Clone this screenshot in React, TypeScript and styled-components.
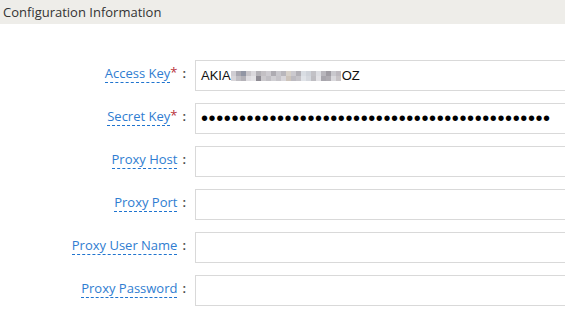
import React from "react";
import styled, { createGlobalStyle } from "styled-components";

const GlobalStyle = createGlobalStyle`
  html, body {
    margin: 0;
    padding: 0;
    background: #ffffff;
    overflow: hidden;
  }
  body {
    font-family: "Open Sans", "Liberation Sans", sans-serif;
  }
`;

const Page = styled.div`
  width: 565px;
  height: 313px;
  overflow: hidden;
`;

const SectionHeader = styled.div`
  height: 24px;
  background: #eeede9;
  color: #333333;
  font-size: 13px;
  line-height: 24px;
  padding-left: 3px;
`;

const Form = styled.div`
  display: flex;
  flex-direction: column;
  gap: 12px;
  padding-top: 36px;
`;

const Row = styled.div`
  display: grid;
  grid-template-columns: 186px 400px;
  column-gap: 9px;
  align-items: center;
  height: 31px;
`;

const LabelCell = styled.div`
  display: flex;
  justify-content: flex-end;
  align-items: baseline;
  font-size: 13px;
  margin-top: -4px;
`;

const LabelText = styled.span`
  color: #2f7dd1;
  border-bottom: 1px dashed #1f74cf;
  line-height: 17px;
`;

const Required = styled.span`
  color: #b8323a;
  font-size: 13px;
  position: relative;
  top: -1px;
`;

const Colon = styled.span`
  color: #444444;
  margin-left: 5px;
  font-weight: 600;
`;

const Field = styled.div`
  box-sizing: border-box;
  height: 31px;
  border: 1px solid #d9d9d9;
  background: #ffffff;
  display: flex;
  align-items: center;
  padding-left: 5px;
  font-family: "Liberation Sans", Arial, sans-serif;
  font-size: 13px;
  color: #111111;
`;

const PasswordInput = styled.input`
  border: none;
  outline: none;
  padding: 0;
  margin: 0;
  width: 390px;
  background: transparent;
  font-family: "Liberation Sans", Arial, sans-serif;
  font-size: 20px;
  letter-spacing: 0.6px;
  color: #000000;
`;

const Mosaic = styled.span`
  display: grid;
  grid-template-columns: repeat(22, 5px);
  grid-auto-rows: 5px;
  margin: 1px 1px 0 0;
`;

const Tile = styled.span<{ $c: string }>`
  background: ${(p) => p.$c};
`;

const tiles = [
  "#cfcdd2", "#a9a8b0", "#9296a4", "#c9c6ca", "#dad8dc", "#b3b1b6", "#c3c0c4",
  "#cdcbd0", "#aeacb2", "#c8c7cc", "#b9b7bc", "#d6d0c8", "#cbc9ce", "#b2b0b6",
  "#d9dde3", "#cfd3da", "#c2c1c6", "#dcdde2", "#b8b6bc", "#9f9ca3", "#c9c8cd", "#bdb9bf",
  "#d7d5d9", "#c0bec3", "#b4b2b8", "#dfdde1", "#e4e3e6", "#8e8b93", "#cbc9cd",
  "#c1bfc4", "#d0cfd3", "#c6c4c9", "#d8d6da", "#cdc4bb", "#bdbbc1", "#c5c3c8",
  "#e0e3e8", "#d5d8de", "#bebdc2", "#e2e1e5", "#a8a6ad", "#aeabb1", "#d9d8dc", "#c7c3c6",
];

type FieldRow = { label: string; required?: boolean; kind?: "key" | "secret" };

const rows: FieldRow[] = [
  { label: "Access Key", required: true, kind: "key" },
  { label: "Secret Key", required: true, kind: "secret" },
  { label: "Proxy Host" },
  { label: "Proxy Port" },
  { label: "Proxy User Name" },
  { label: "Proxy Password" },
];

const renderValue = (kind?: string) => {
  if (kind === "key") {
    return (
      <>
        <span>AKIA</span>
        <Mosaic>
          {tiles.map((c, i) => (
            <Tile key={i} $c={c} />
          ))}
        </Mosaic>
        <span>OZ</span>
      </>
    );
  }
  if (kind === "secret") {
    return <PasswordInput type="password" readOnly defaultValue={"x".repeat(46)} />;
  }
  return null;
};

export default function App() {
  return (
    <Page>
      <GlobalStyle />
      <SectionHeader>Configuration Information</SectionHeader>
      <Form>
        {rows.map((r) => (
          <Row key={r.label}>
            <LabelCell>
              <LabelText>{r.label}</LabelText>
              {r.required && <Required>*</Required>}
              <Colon>:</Colon>
            </LabelCell>
            <Field>{renderValue(r.kind)}</Field>
          </Row>
        ))}
      </Form>
    </Page>
  );
}
